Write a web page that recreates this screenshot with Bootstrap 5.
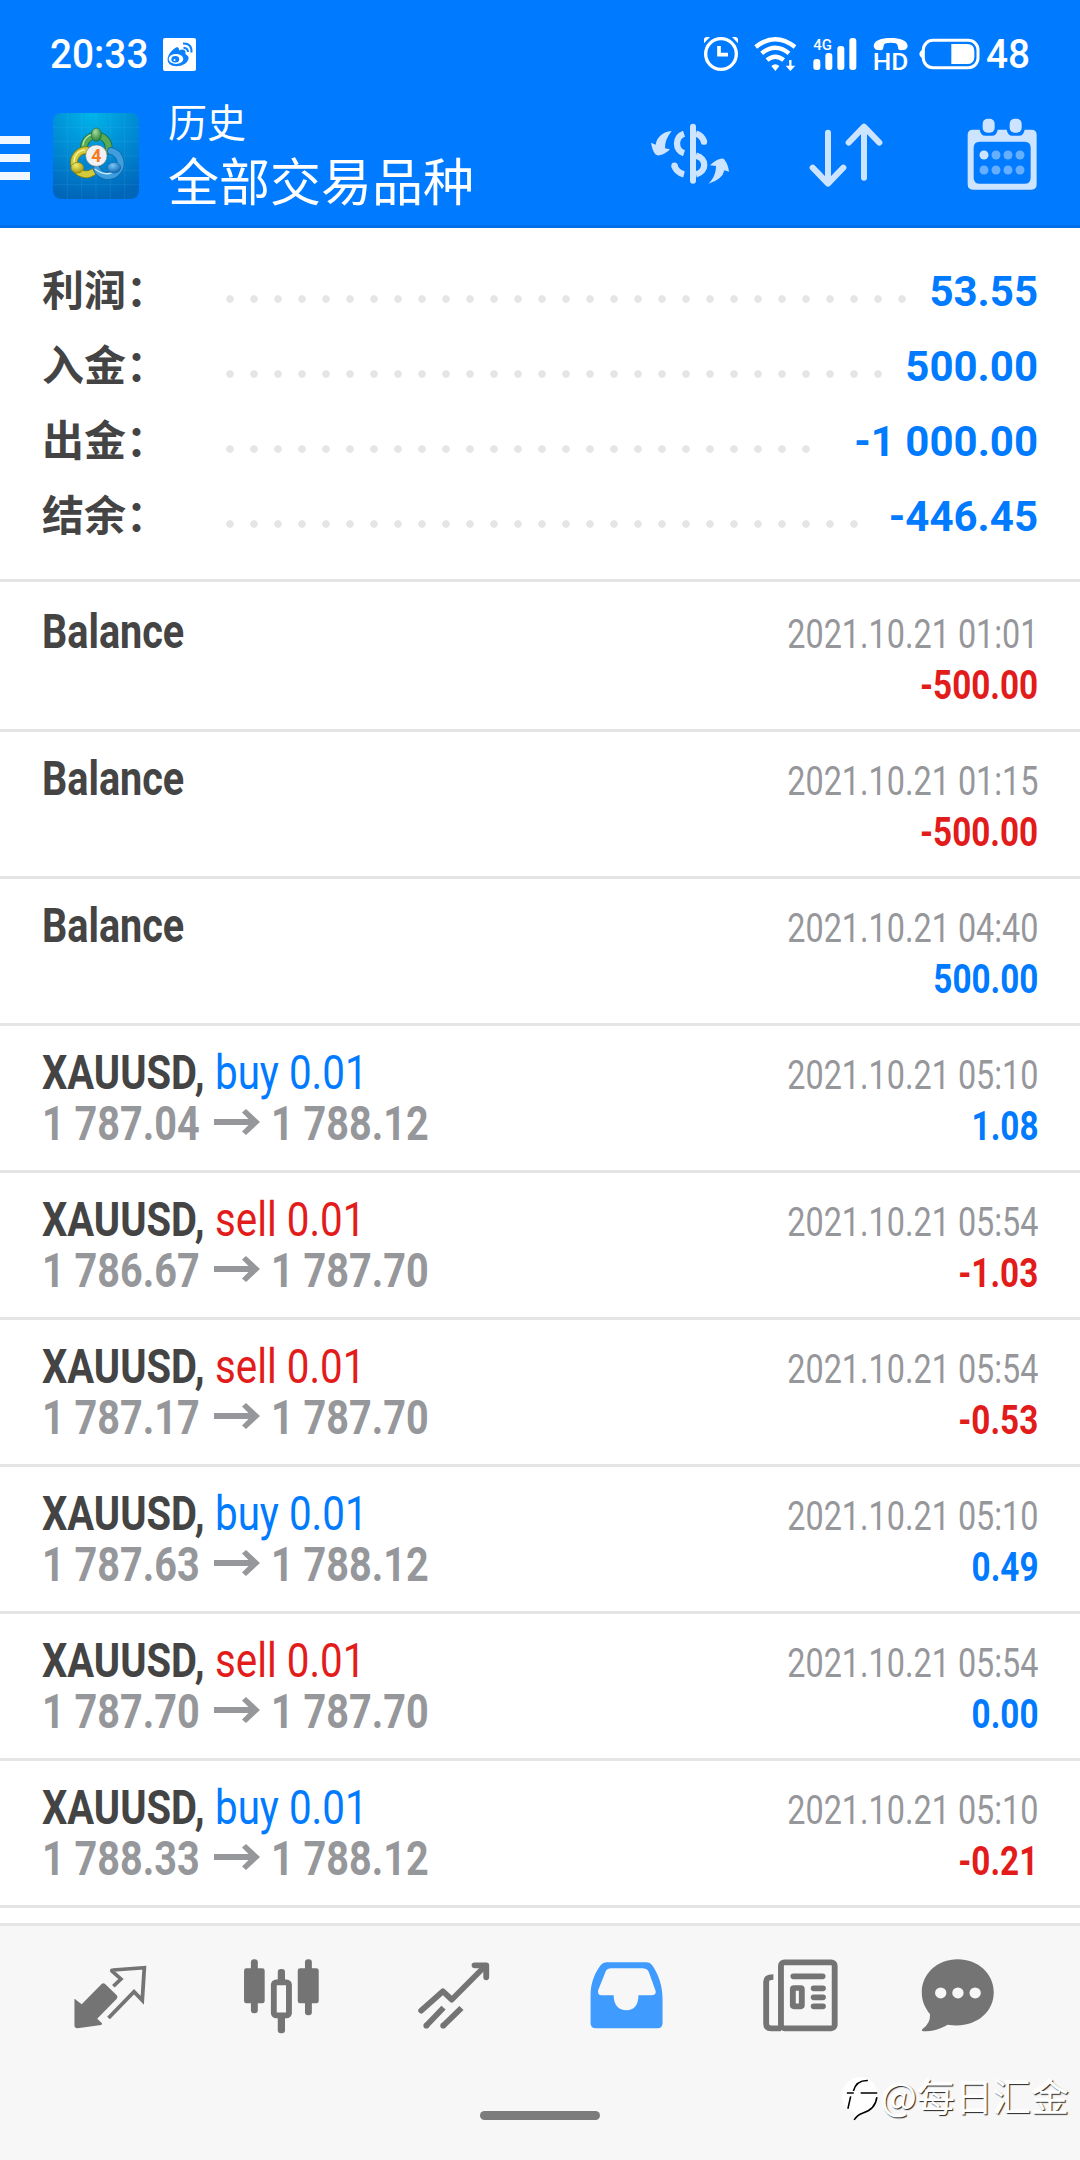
<!DOCTYPE html>
<html lang="zh-CN">
<head>
<meta charset="utf-8">
<meta name="viewport" content="width=device-width, initial-scale=1">
<title>历史</title>
<link rel="stylesheet" href="https://cdn.jsdelivr.net/npm/bootstrap@5.3.0/dist/css/bootstrap.min.css">
<style>
  :root { --blue:#007aff; --red:#e21b1b; --ink:#444; --mute:#96979b; --rule:#e5e5e5; }
  body { font-family: Roboto, "Noto Sans CJK SC", sans-serif; background:#fff; color:var(--ink); }
  svg { display:block; flex:none; overflow:visible; }
  .screen { width:1080px; height:2160px; overflow:hidden; }
  .topbar { height:228px; background:var(--blue); border-bottom:3px solid #006ee6; color:#fff; }
  .status { height:40px; margin-top:34px; padding:0 51px 0 50px; font-size:40px; line-height:40px; font-weight:500; }
  .clock { width:113px; padding-top:2px; }
  .clock span, .batt-num span { display:inline-block; transform:scaleX(.97); transform-origin:left; }
  .batt-num { margin-left:6px; width:43px; padding-top:1px; }
  .appbar { height:151px; }
  .burger { width:30px; gap:10px; margin-top:16px; }
  .burger i { height:8px; background:#f0f7ff; }
  .app-logo { margin:12px 0 0 23px; }
  .titles { margin-left:29px; padding-top:17px; font-weight:400; }
  .title-sm { font-size:39px; line-height:48px; }
  .title-lg { font-size:51px; line-height:64px; margin-top:4px; }
  .tool { width:156px; padding-top:8px; }
  .summary { height:351px; padding:25px 42px 0 42px; }
  .sum-row { height:75px; font-weight:700; font-size:42px; line-height:75px; }
  .sum-label { width:184px; padding-bottom:6px; font-family:"Noto Sans CJK SC", sans-serif; }
  .sum-val { padding-top:2px; }
  .leader { height:8px; margin-top:16px; background:radial-gradient(circle at 4px 4px, #e5e5e5 3.4px, transparent 4.1px) 0 0/24px 8px repeat-x; }
  .deals { border-top:3px solid var(--rule); padding-top:3px; height:1344px; overflow:hidden; }
  .deal { height:147px; border-bottom:3px solid var(--rule); padding:21px 42px 0 42px; }
  .ln { height:51px; line-height:51px; white-space:nowrap; }
  .l48 { font-size:48px; font-weight:700; display:flex; }
  .r40 { font-size:40px; text-align:right; }
  .right { padding-top:3px; }
  .cond { display:inline-block; transform-origin:left center; }
  .cond-r { display:inline-block; transform-origin:right center; }
  .bal { transform:scaleX(.824); }
  .sym { transform:scaleX(.832); width:173px; }
  .side { transform:scaleX(.84); font-weight:400; }
  .px { transform:scaleX(.825); }
  .px-a { width:172px; }
  .arrow { width:46px; margin-right:11px; }
  .when { transform:scaleX(.809); color:var(--mute); }
  .amt { transform:scaleX(.831); font-weight:700; }
  .up { color:var(--blue); } .down { color:var(--red); } .mute { color:var(--mute); }
  .tabs { height:237px; background:#f7f7f7; border-top:3px solid var(--rule); padding:31px 0 0 24px; color:#747474; }
  .tab { width:172.6px; } .tab-last { width:141.4px; }
  .homebar { width:120px; height:9px; border-radius:5px; background:#7c7c7c; margin:76px 0 0 456px; }
  .wmark { right:11px; bottom:36px; height:50px; color:#fff; font:400 38px/50px "Noto Sans CJK SC", sans-serif; text-shadow:1px 1px 1px #222, -1px -1px 1px #fff; }
  .wmark span { padding-bottom:8px; }
</style>
</head>
<body>
<main class="screen position-relative d-flex flex-column">
  <header class="topbar d-flex flex-column flex-shrink-0">
    <div class="status d-flex align-items-center flex-shrink-0">
      <div class="clock"><span>20:33</span></div>
      <svg width="33" height="33" viewBox="0 0 33 33"><rect width="33" height="33" rx="2" fill="#fff"/><path d="M13 9.500c2-1 3.500.5 3 3 3-1.500 6.500-1.500 6.500 2 0 1-.5 1.500.5 2 4.500 2 2.500 7-1 9.200-5 3.300-12 3.300-15.500.3C2 22 6 13.500 13 9.500z" fill="#0a80ff"/><ellipse cx="13" cy="21" rx="7.300" ry="5" fill="#fff"/><ellipse cx="12.300" cy="21.300" rx="3.900" ry="3.300" fill="#0a80ff"/><circle cx="11.500" cy="22" r="1" fill="#fff"/><path d="M20.500 10q4-.5 4.500 4M20 5.500q9-.5 8.500 9" fill="none" stroke="#0a80ff" stroke-width="2"/></svg>
      <div class="d-flex align-items-center ms-auto">
        <svg width="34" height="34" viewBox="252 111 102 102" fill="none" stroke="#fff"><circle cx="303" cy="162" r="46" stroke-width="10"/><path d="M297 138v26h27" stroke-width="11"/><path d="M252 130v-14q2-5 8-5h10zM354 130v-14q-2-5-8-5h-10z" fill="#fff" stroke="none"/></svg>
        <svg class="ms-3" width="43" height="34" viewBox="404 111 129 102" fill="none" stroke="#fff" stroke-width="13"><path d="M409 141Q468 94 527 141M427 160Q468 126 509 160M443 180Q468 160 493 180"/><path d="M456 198q12-10 24 0l-12 15z" fill="#fff" stroke="none"/><path d="M513 180v24" stroke-width="7"/><path d="M499 197h29l-15 16z" fill="#fff" stroke="none"/></svg>
        <svg class="ms-3" width="44" height="34" viewBox="581 111 132 102" fill="#fff"><text x="582" y="150" font-size="46" font-weight="500" textLength="56" lengthAdjust="spacingAndGlyphs" font-family="Roboto">4G</text><rect x="582" y="177" width="21" height="33" rx="9"/><rect x="618" y="159" width="21" height="51" rx="9"/><rect x="654" y="138" width="21" height="72" rx="9"/><rect x="690" y="114" width="21" height="96" rx="9"/></svg>
        <svg class="ms-3" width="36" height="34" viewBox="760 111 108 102" fill="#fff"><path d="M762 139C762 121 785 114 813 114s51 7 51 25q-1 8-7 10l-14 2q-8 0-8-9-1-10-7-12-15-3-30 0-6 2-7 12 0 9-8 9l-14-2q-6-2-7-10z"/><text x="759" y="210" font-size="74" font-weight="500" textLength="107" lengthAdjust="spacingAndGlyphs" font-family="Roboto">HD</text></svg>
        <svg style="margin-left:10px" width="61" height="34" viewBox="899 111 183 102"><path d="M912 147q-12 7-12 15t12 15z" fill="#fff"/><rect x="912" y="121" width="164" height="82" rx="29" fill="none" stroke="#fff" stroke-width="9"/><path d="M996 132h47q22 0 22 22v16q0 22-22 22h-47z" fill="#fff"/></svg>
        <div class="batt-num"><span>48</span></div>
      </div>
    </div>
    <div class="appbar d-flex align-items-center">
      <div class="burger d-flex flex-column"><i></i><i></i><i></i></div>
      <svg class="app-logo" width="86" height="86" viewBox="39 39 258 258">
        <defs>
          <radialGradient id="sky" cx=".45" cy="0" r="1"><stop offset="0" stop-color="#00b4ea"/><stop offset=".55" stop-color="#0089d2"/><stop offset="1" stop-color="#0066ba"/></radialGradient>
          <radialGradient id="gr" cx=".4" cy=".3" r=".7"><stop offset="0" stop-color="#a7dc9a"/><stop offset="1" stop-color="#25803a"/></radialGradient>
          <radialGradient id="ye" cx=".4" cy=".3" r=".7"><stop offset="0" stop-color="#f2ec6c"/><stop offset="1" stop-color="#a79a12"/></radialGradient>
          <radialGradient id="bl" cx=".4" cy=".3" r=".7"><stop offset="0" stop-color="#7cc8f4"/><stop offset="1" stop-color="#0f68b4"/></radialGradient>
        </defs>
        <rect x="39" y="39" width="258" height="258" rx="24" fill="url(#sky)"/>
        <path d="M82 39v258M125 39v258M168 39v258M211 39v258M254 39v258M39 82h258M39 125h258M39 168h258M39 211h258M39 254h258" stroke="#6cc8ff" stroke-opacity=".18" stroke-width="2"/>
        <g fill="none" stroke-linecap="round">
          <path d="M133 152A37 37 0 1 1 205 152" stroke="#1d6b38" stroke-width="23"/>
          <path d="M133 152A37 37 0 1 1 205 152" stroke="#58ab54" stroke-width="18"/>
          <path d="M129 135A34 34 0 0 1 160 103" stroke="#b5e2ab" stroke-width="4"/>
          <path d="M140 151A36 36 0 1 0 158 217" stroke="#857d14" stroke-width="23"/>
          <path d="M140 151A36 36 0 1 0 158 217" stroke="#d3ca3a" stroke-width="18"/>
          <path d="M103 190A34 34 0 0 1 133 150" stroke="#f7f3a0" stroke-width="4"/>
          <path d="M213 153A38 38 0 1 1 170 207" stroke="#1468ab" stroke-width="23"/>
          <path d="M213 153A38 38 0 1 1 170 207" stroke="#3f9fde" stroke-width="18"/>
          <path d="M166 208q26 20 50 10" stroke="#c8ecff" stroke-width="4"/>
        </g>
        <g stroke-width="2">
          <ellipse cx="169" cy="104" rx="15" ry="20" fill="url(#gr)" stroke="#1d6b38"/>
          <ellipse cx="112" cy="203" rx="19" ry="16" fill="url(#ye)" stroke="#857d14"/>
          <ellipse cx="222" cy="203" rx="20" ry="16" fill="url(#bl)" stroke="#1468ab"/>
        </g>
        <circle cx="169" cy="167" r="32" fill="#f1f1f3" stroke="#666" stroke-width="1.500"/>
        <text x="169" y="186" text-anchor="middle" font-family="Roboto" font-weight="700" font-size="53" fill="#f47b20">4</text>
      </svg>
      <div class="titles flex-grow-1">
        <div class="title-sm">历史</div>
        <div class="title-lg">全部交易品种</div>
      </div>
      <div class="tool d-flex justify-content-center">
        <svg width="80" height="72" viewBox="90 355 240 216" fill="none" stroke="#cce4ff" stroke-width="19"><path d="M219 381v162" stroke-linecap="round" stroke-width="18"/><path d="M192 402C164 411 164 452 192 461M228 468C261 476 261 515 228 524"/><path d="M228 402Q246 407 252 426" /><circle cx="252" cy="426" r="9.500" fill="#cce4ff" stroke="none"/><path d="M163 497Q168 518 192 524"/><circle cx="163.500" cy="498" r="9.500" fill="#cce4ff" stroke="none"/><g fill="#cce4ff" stroke="none"><path d="M155 394C125 397 110 415 107 435L93 429Q97 452 106 464 110 468 118 467 138 463 150 449L135 446Q134 420 155 394zM265 552C285 535 288 512 288 499L270 497Q285 480 303 477 311 476 314 481 325 496 327 516L313 512Q308 540 265 552z"/></g></svg>
      </div>
      <div class="tool d-flex justify-content-center">
        <svg width="80" height="72" viewBox="558 355 240 216" fill="none" stroke="#cce4ff" stroke-width="18" stroke-linecap="round" stroke-linejoin="round"><path d="M624 399v152M578 504l46 48 46-48M732 534V382M686 429l46-48 46 48"/></svg>
      </div>
      <div class="tool d-flex justify-content-center">
        <svg width="80" height="72" viewBox="1027 355 240 216"><path fill="#cce4ff" fill-rule="evenodd" d="M1060 390h20q3 18 17 18h20q14 0 17-18h27q3 18 17 18h20q14 0 17-18h20q16 0 16 16v148q0 16-16 16h-175q-16 0-16-16V406q0-16 16-16zM1080 426q-18 0-18 18v90q0 18 18 18h135q18 0 18-18v-90q0-18-18-18z"/><g fill="#cce4ff" stroke="#007aff" stroke-width="10" paint-order="stroke"><rect x="1089" y="357" width="36" height="42" rx="15"/><rect x="1170" y="357" width="36" height="42" rx="15"/></g><circle cx="1093" cy="466" r="13.500" fill="#cce4ff"/><g fill="#66afff"><circle cx="1129" cy="466" r="13.500"/><circle cx="1165" cy="466" r="13.500"/><circle cx="1201" cy="466" r="13.500"/><circle cx="1093" cy="511" r="13.500"/><circle cx="1129" cy="511" r="13.500"/><circle cx="1165" cy="511" r="13.500"/><circle cx="1201" cy="511" r="13.500"/></g></svg>
      </div>
    </div>
  </header>

  <section class="summary flex-shrink-0">
    <div class="sum-row d-flex align-items-center"><div class="sum-label">利润：</div><div class="leader" style="width:680px"></div><div class="sum-val ms-auto up">53.55</div></div>
    <div class="sum-row d-flex align-items-center"><div class="sum-label">入金：</div><div class="leader" style="width:656px"></div><div class="sum-val ms-auto up">500.00</div></div>
    <div class="sum-row d-flex align-items-center"><div class="sum-label">出金：</div><div class="leader" style="width:584px"></div><div class="sum-val ms-auto up">-1 000.00</div></div>
    <div class="sum-row d-flex align-items-center"><div class="sum-label">结余：</div><div class="leader" style="width:632px"></div><div class="sum-val ms-auto up">-446.45</div></div>
  </section>

  <section class="deals flex-shrink-0" id="deals"></section>

  <nav class="tabs flex-shrink-0">
    <div class="d-flex">
      <div class="tab d-flex justify-content-center"><svg width="79.2" height="78.3" viewBox="205 170 230 235" preserveAspectRatio="none"><path fill="currentColor" d="M215 296q2-1 4 2l17 14 58-61q5-4 10 0l34 34q4 5 0 10l-57 60 14 14q2 4-3 5l-68 10q-9 0-9-9z"/><path fill="none" stroke="currentColor" stroke-width="11" d="M328 258l22-22-26-24q-2-3 3-3l91-7-6 98-24-26-74 79"/></svg></div>
      <div class="tab d-flex justify-content-center"><svg width="79.2" height="78.3" viewBox="706 170 230 235" preserveAspectRatio="none"><g fill="currentColor"><rect x="709" y="204" width="60" height="105" rx="7"/><rect x="729" y="177" width="20" height="162" rx="9"/><rect x="865" y="204" width="61" height="105" rx="7"/><rect x="886" y="177" width="20" height="168" rx="9"/><rect x="807" y="206" width="21" height="40" rx="9"/><rect x="807" y="345" width="21" height="54" rx="9"/></g><rect x="795.500" y="246" width="44" height="99" rx="7" fill="#f7f7f7" stroke="currentColor" stroke-width="17"/></svg></div>
      <div class="tab d-flex justify-content-center"><svg width="79.2" height="78.3" viewBox="1207 170 230 235" preserveAspectRatio="none" fill="none" stroke="currentColor" stroke-width="17"><path d="M1222 331l63-58 26 25 98-102" stroke-linejoin="round" stroke-linecap="round"/><path d="M1377 195h34v36" stroke-linecap="round" stroke-linejoin="round"/><path d="M1237 376l50-54M1286 376l53-53"/><g fill="currentColor" stroke="none"><circle cx="1237" cy="376" r="8.500"/><circle cx="1286" cy="376" r="8.500"/></g></svg></div>
      <div class="tab d-flex justify-content-center"><svg width="79.2" height="78.3" viewBox="140.500 170 230 235" preserveAspectRatio="none"><path fill="#409bff" fill-rule="evenodd" d="M194 186h117q10 0 16 9c20 30 30 65 30 100v74q0 15-15 15H163q-15 0-15-15v-84c0-35 11-65 29-90q7-9 17-9zM208 204q-12 0-16 9l-22 57q-3 15 10 15h35c0 30 15 45 37 45s35-15 35-45h37q15 0 13-13l-20-57q-4-11-20-11z"/></svg></div>
      <div class="tab d-flex justify-content-center"><svg width="79.2" height="78.3" viewBox="642 170 230 235" preserveAspectRatio="none" fill="none" stroke="currentColor" stroke-width="17"><rect x="700" y="186" width="156" height="198" rx="10"/><path d="M678 230q-21 0-21 14v126q0 14 14 14h29"/><path d="M736 228h85M795 264h27M795 291h27M795 318h27" stroke-linecap="round"/><rect x="734.500" y="263" width="26" height="55" rx="3"/></svg></div>
      <div class="tab-last d-flex justify-content-center"><svg width="79.2" height="78.3" viewBox="1098 170 230 235" preserveAspectRatio="none"><path fill="currentColor" d="M1213 177c60 0 105 44 105 99 0 66-60 110-134 97-20 13-45 20-70 20q-9-2-2-8 22-15 21-43c-14-18-24-38-24-66 0-55 45-99 104-99z"/><g fill="#f7f7f7"><circle cx="1164" cy="278" r="16.500"/><circle cx="1214" cy="278" r="16.500"/><circle cx="1264" cy="278" r="16.500"/></g></svg></div>
    </div>
    <div class="homebar"></div>
  </nav>

  <div class="wmark position-absolute d-flex align-items-center">
    <svg width="40" height="46" viewBox="875 540 116 135" preserveAspectRatio="none"><path d="M890 636C860 590 890 544 932 544c34 0 52 30 47 58-5 28-28 44-46 48-10 4-14 10-20 18l3-20z" fill="#fff"/><path d="M892 590h20M932 590h48M911 584q8-32 42-31M903 600l-8 36M979 602q-4 36-42 47-14 4-24 20" fill="none" stroke="#000" stroke-width="4.500"/></svg>
    <span>@每日汇金</span>
  </div>
</main>
<script src="https://cdn.jsdelivr.net/npm/bootstrap@5.3.0/dist/js/bootstrap.bundle.min.js"></script>
<script>
  // [side, open price, close price, time, result]
  const rows = [
    ['', '', '', '01:01', '-500.00'],
    ['', '', '', '01:15', '-500.00'],
    ['', '', '', '04:40', '500.00'],
    ['buy', '1 787.04', '1 788.12', '05:10', '1.08'],
    ['sell', '1 786.67', '1 787.70', '05:54', '-1.03'],
    ['sell', '1 787.17', '1 787.70', '05:54', '-0.53'],
    ['buy', '1 787.63', '1 788.12', '05:10', '0.49'],
    ['sell', '1 787.70', '1 787.70', '05:54', '0.00'],
    ['buy', '1 788.33', '1 788.12', '05:10', '-0.21']
  ];
  const arrow = '<svg class="arrow" width="46" height="51" viewBox="0 0 46 51"><path d="M0 24h39" stroke="currentColor" stroke-width="6"/><path d="M28 14.500l4-3.500 14 13-14 13-4-3.500 9.500-9.500z" fill="currentColor"/></svg>';
  document.getElementById('deals').innerHTML = rows.map(([side, open, close, time, res]) => `
    <div class="deal d-flex justify-content-between">
      <div>${side ? `
        <div class="ln l48"><span class="cond sym">XAUUSD,</span><span class="cond side ${side === 'buy' ? 'up' : 'down'}">${side} 0.01</span></div>
        <div class="ln l48 mute"><span class="cond px px-a">${open}</span>${arrow}<span class="cond px">${close}</span></div>` : `
        <div class="ln l48"><span class="cond bal">Balance</span></div>`}
      </div>
      <div class="right">
        <div class="ln r40"><span class="cond-r when">2021.10.21 ${time}</span></div>
        <div class="ln r40"><span class="cond-r amt ${res[0] === '-' ? 'down' : 'up'}">${res}</span></div>
      </div>
    </div>`).join('');
</script>
</body>
</html>
